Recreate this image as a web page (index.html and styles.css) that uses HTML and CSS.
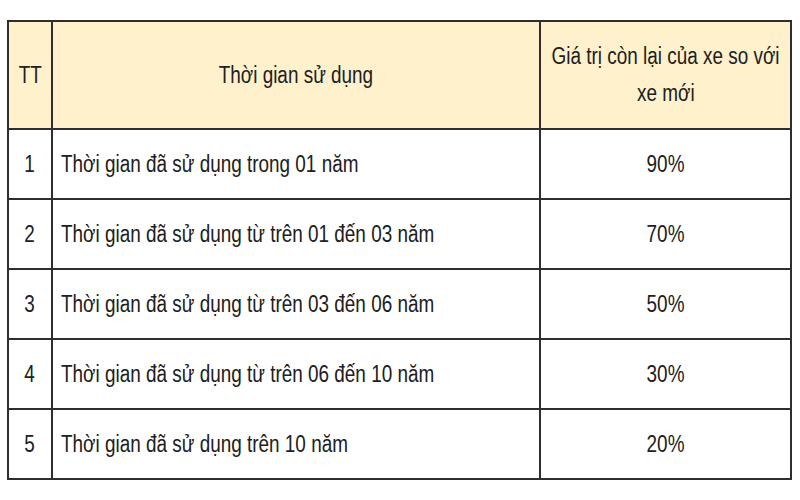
FILE: index.html
```html
<!DOCTYPE html>
<html lang="vi">
<head>
<meta charset="utf-8">
<title>Giá trị còn lại của xe</title>
<link rel="stylesheet" href="styles.css">
</head>
<body>
<div class="wrap">
<table class="tbl">
  <colgroup>
    <col class="c1"><col class="c2"><col class="c3">
  </colgroup>
  <thead>
    <tr class="head">
      <th><span class="t">TT</span></th>
      <th><span class="t">Thời gian sử dụng</span></th>
      <th>
        <div class="lines">
          <span class="t">Giá trị còn lại của xe so với</span>
          <span class="t">xe mới</span>
        </div>
      </th>
    </tr>
  </thead>
  <tbody>
    <tr><td class="num"><span class="t">1</span></td><td class="desc"><span class="t l">Thời gian đã sử dụng trong 01 năm</span></td><td class="val"><span class="t">90%</span></td></tr>
    <tr><td class="num"><span class="t">2</span></td><td class="desc"><span class="t l">Thời gian đã sử dụng từ trên 01 đến 03 năm</span></td><td class="val"><span class="t">70%</span></td></tr>
    <tr><td class="num"><span class="t">3</span></td><td class="desc"><span class="t l">Thời gian đã sử dụng từ trên 03 đến 06 năm</span></td><td class="val"><span class="t">50%</span></td></tr>
    <tr><td class="num"><span class="t">4</span></td><td class="desc"><span class="t l">Thời gian đã sử dụng từ trên 06 đến 10 năm</span></td><td class="val"><span class="t">30%</span></td></tr>
    <tr><td class="num"><span class="t">5</span></td><td class="desc"><span class="t l">Thời gian đã sử dụng trên 10 năm</span></td><td class="val"><span class="t">20%</span></td></tr>
  </tbody>
</table>
</div>
</body>
</html>
```
FILE: styles.css
```css
html, body {
  margin: 0;
  padding: 0;
  background: #ffffff;
}
.wrap {
  padding: 20px 0 0 7px;
}
.tbl {
  border-collapse: collapse;
  table-layout: fixed;
  width: 783px;
  font-family: "Liberation Sans", Arial, sans-serif;
  font-size: 23.5px;
  color: #202020;
}
.c1 { width: 44px; }
.c2 { width: 488px; }
.c3 { width: 251px; }
.tbl th, .tbl td {
  border: 2px solid #2e2e2e;
  padding: 0;
  text-align: center;
  vertical-align: middle;
  font-weight: normal;
}
.head th {
  background: #fef1cc;
  height: 106px;
  line-height: 37px;
}
.lines {
  display: flex;
  flex-direction: column;
  align-items: center;
}
.tbl tbody td {
  height: 68px;
  line-height: 28px;
}
.tbl td.desc {
  text-align: left;
  padding-left: 8px;
}
.t {
  display: inline-block;
  white-space: nowrap;
  transform: scaleX(0.805);
  transform-origin: center center;
}
.t.l {
  transform-origin: left center;
}
```
